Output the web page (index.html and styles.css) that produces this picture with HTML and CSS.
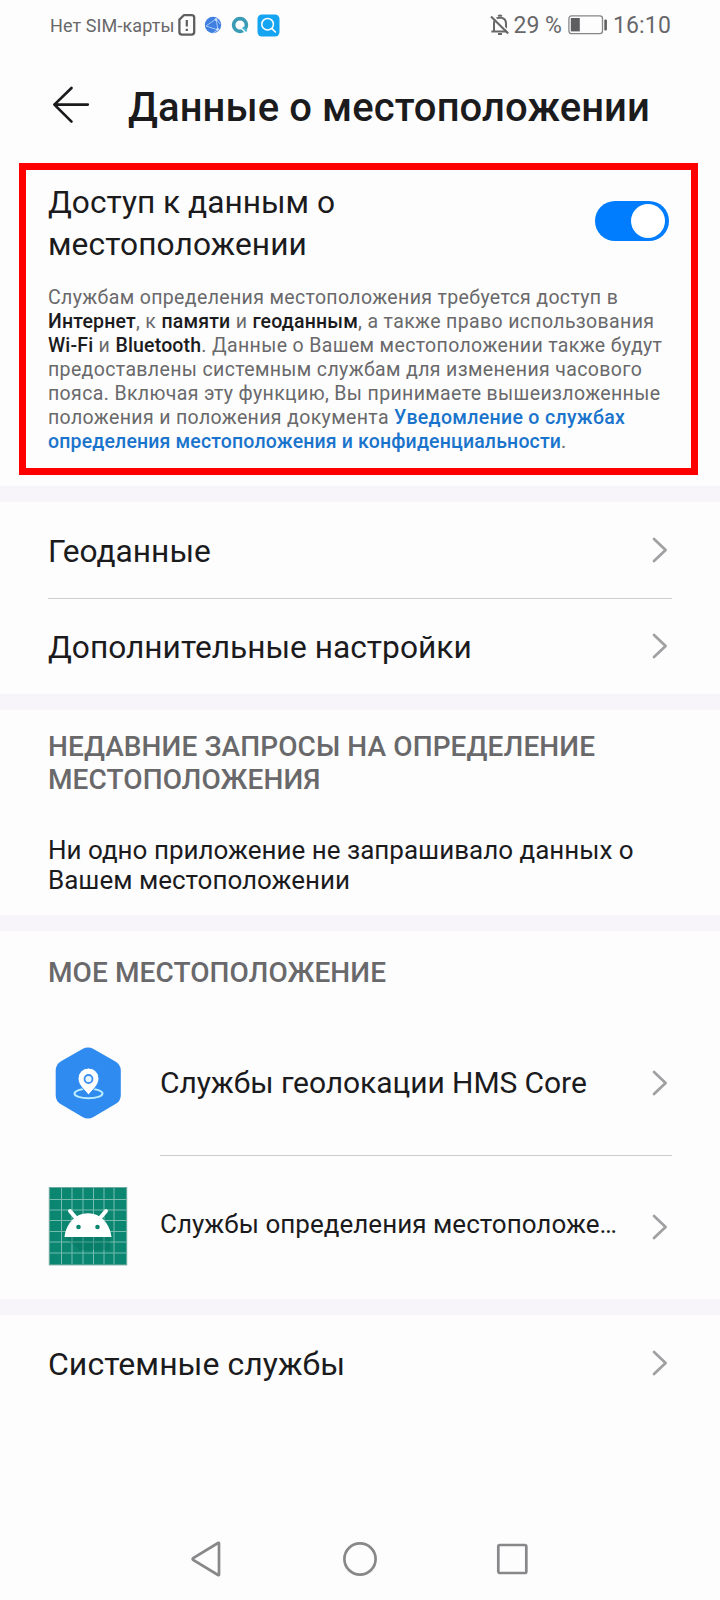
FILE: index.html
```html
<!DOCTYPE html>
<html lang="ru">
<head>
<meta charset="utf-8">
<title>Данные о местоположении</title>
<link rel="stylesheet" href="styles.css">
</head>
<body>
<svg class="defs" width="0" height="0" aria-hidden="true">
  <symbol id="chevron" viewBox="0 0 16 26"><path d="M2 2 L13.6 13 L2 24" fill="none" stroke="#a09fa2" stroke-width="2.7" stroke-linecap="round" stroke-linejoin="round"/></symbol>
</svg>
<header class="status">
  <span class="carrier">Нет SIM-карты</span>
  <svg class="sim" width="18" height="22" viewBox="0 0 18 22"><path d="M5.800 1.200H13.600Q16.200 1.200 16.200 3.800V18Q16.200 20.600 13.600 20.600H4Q1.400 20.600 1.400 18V5.600Z" fill="none" stroke="#5f5f61" stroke-width="2.300" stroke-linejoin="round"/><path d="M8.800 6V12.600M8.800 14.800V17" stroke="#5f5f61" stroke-width="2.200"/></svg>
  <svg class="globe" width="18" height="18" viewBox="0 0 18 18"><circle cx="9" cy="9" r="8.200" fill="#3f7fe0"/><path d="M2 10L12 3L14 14L2 10M12 3L16 8M14 14L9 17" fill="none" stroke="#a8c8f8" stroke-width="1"/><circle cx="12" cy="3.600" r="1.300" fill="#cfe2ff"/><circle cx="13.600" cy="13.400" r="1.300" fill="#cfe2ff"/></svg>
  <svg class="ring" width="18" height="18" viewBox="0 0 18 18"><circle cx="9" cy="9" r="6.400" fill="none" stroke="#3a9bb5" stroke-width="3.600"/><path d="M10.500 12.500L12.500 10.500L16.500 14.500L14.500 16.500Z" fill="#4cb9dc"/><path d="M10.500 12.500L15 17" stroke="#fdfdfd" stroke-width="1.300"/></svg>
  <svg class="search" width="23" height="23" viewBox="0 0 23 23"><rect x=".5" y=".5" width="22" height="22" rx="4.500" fill="#15a4f2"/><circle cx="10.600" cy="10.200" r="5.800" fill="none" stroke="#fff" stroke-width="1.500"/><path d="M15 14.600L18.400 18" stroke="#fff" stroke-width="1.600" stroke-linecap="round"/></svg>
  <span class="spacer"></span>
  <svg class="bell" width="20" height="22" viewBox="0 0 20 22"><path d="M4 17V9.500Q4 4 10 3.400Q16 4 16 9.500V17M1.400 17.600H18.200" fill="none" stroke="#68686a" stroke-width="2"/><path d="M8.200 2.400Q10 .2 11.800 2.400M8 20H12" fill="none" stroke="#68686a" stroke-width="1.800"/><path d="M2.600 1.600L19.400 18.200" stroke="#fdfdfd" stroke-width="1.600"/><path d="M1 2.400L18.200 19.600" stroke="#68686a" stroke-width="2.100"/></svg>
  <span class="pct">29 %</span>
  <svg class="battery" width="40" height="20" viewBox="0 0 40 20"><rect x=".9" y=".9" width="33.600" height="17.800" rx="2.600" fill="none" stroke="#868688" stroke-width="1.300"/><rect x="2.800" y="3" width="9" height="13.400" fill="#5e5e60"/><rect x="36.300" y="4.400" width="2.600" height="11" rx="1" fill="#5e5e60"/></svg>
  <span class="clock">16:10</span>
</header>
<div class="titlebar">
  <svg class="back" width="38" height="38" viewBox="0 0 38 38"><path d="M19.500 2L2.400 18.600L19.500 35.600M2.400 18.600H35.800" fill="none" stroke="#1b1b1d" stroke-width="2.700" stroke-linecap="round" stroke-linejoin="round"/></svg>
  <h1 class="title">Данные о местоположении</h1>
</div>
<section class="access">
  <div class="access-row">
    <h2 class="access-title">Доступ к данным о<br><span class="wide">местоположении</span></h2>
    <span class="switch"><span class="knob"></span></span>
  </div>
  <p class="note">Службам определения местоположения требуется доступ в<br><b>Интернет</b>, к <b>памяти</b> и <b>геоданным</b>, а также право использования<br><b>Wi-Fi</b> и <b>Bluetooth</b>. Данные о Вашем местоположении также будут<br>предоставлены системным службам для изменения часового<br>пояса. Включая эту функцию, Вы принимаете вышеизложенные<br>положения и положения документа <a class="link first-line">Уведомление о службах</a><br><a class="link">определения местоположения и конфиденциальности</a>.</p>
</section>
<section class="group nav-group">
  <div class="row"><span class="label">Геоданные</span><svg class="chev"><use href="#chevron"/></svg></div>
  <div class="row ruled"><span class="label">Дополнительные настройки</span><svg class="chev"><use href="#chevron"/></svg></div>
</section>
<section class="group recent">
  <h3 class="caption">НЕДАВНИЕ ЗАПРОСЫ НА ОПРЕДЕЛЕНИЕ<br>МЕСТОПОЛОЖЕНИЯ</h3>
  <p class="empty">Ни одно приложение не запрашивало данных о<br>Вашем местоположении</p>
</section>
<section class="group mine">
  <h3 class="caption">МОЕ МЕСТОПОЛОЖЕНИЕ</h3>
  <div class="app first">
    <svg class="app-icon" width="80" height="80" viewBox="0 0 80 80"><path d="M34.500 6Q40 3.100 45.500 6L67 18.200Q72.800 21.500 72.800 27.500V52.300Q72.800 58.300 67 61.300L45.500 74Q40 77.200 34.500 74L13 61.300Q7.700 58.300 7.700 52.300V27.500Q7.700 21.500 13 18.200Z" fill="#2f8bf0"/><ellipse cx="40.500" cy="50.500" rx="14" ry="4.800" fill="none" stroke="#b9edff" stroke-width="2"/><path d="M40.500 52C36 46.500 30 42 30 35.500A10.500 10.500 0 0 1 51 35.500C51 42 45 46.500 40.500 52Z" fill="#fff" stroke="#2f8bf0" stroke-width="1"/><circle cx="40.500" cy="36" r="4" fill="#e8f6ff" stroke="#3d8ff0" stroke-width="1.800"/></svg>
    <div class="app-body"><span class="app-name">Службы геолокации HMS Core</span><svg class="chev"><use href="#chevron"/></svg></div>
  </div>
  <div class="app second">
    <svg class="app-icon" width="80" height="80" viewBox="0 0 80 80"><rect x="1.300" y="1.500" width="77.400" height="77.400" fill="#0b8671"/><path d="M13.500 2V78M24 2V78M35 2V78M45.500 2V78M56 2V78M66 2V78M2 13.500H78M2 24H78M2 34.500H78M2 45.500H78M2 56H78M2 67H78" stroke="#75bcae" stroke-width="1"/><rect x="1.300" y="1.500" width="77.400" height="77.400" fill="none" stroke="#6fa99e" stroke-width="1"/><path d="M17 51L31 64H62V51Z" fill="#04705e" opacity=".35"/><path d="M16.500 51C17.500 41 24 30.500 35 27.800Q40 26.500 45 27.800C56 30.500 62.500 41 63.500 51Z" fill="#fff"/><path d="M22 25L28 32M58 25L52 32" stroke="#fff" stroke-width="4" stroke-linecap="round"/><circle cx="30.500" cy="41" r="2.300" fill="#0b8671"/><circle cx="49.500" cy="41" r="2.300" fill="#0b8671"/></svg>
    <div class="app-body"><span class="app-name small">Службы определения местоположе…</span><svg class="chev"><use href="#chevron"/></svg></div>
  </div>
</section>
<section class="group system">
  <div class="row"><span class="label">Системные службы</span><svg class="chev"><use href="#chevron"/></svg></div>
</section>
<footer class="navbar">
  <svg width="34" height="38" viewBox="0 0 34 38"><path d="M29 3.400V34.600Q29 35.600 28 35L3.200 20Q2 19 3.200 18L28 3Q29 2.400 29 3.400Z" fill="none" stroke="#88888a" stroke-width="2.700"/></svg>
  <svg width="38" height="38" viewBox="0 0 38 38"><circle cx="19" cy="19" r="15.600" fill="none" stroke="#88888a" stroke-width="2.700"/></svg>
  <svg width="34" height="38" viewBox="0 0 34 38"><rect x="2.300" y="5" width="28" height="28" rx="1.500" fill="none" stroke="#88888a" stroke-width="2.700"/></svg>
</footer>
</body>
</html>
```

FILE: styles.css
```css
* { box-sizing: border-box; }
body {
  margin: 0;
  width: 720px;
  height: 1600px;
  display: flex;
  flex-direction: column;
  background: #fdfdfd;
  color: #1b1b1d;
  font-family: Roboto, "Noto Sans", sans-serif;
  overflow: hidden;
}
h1, h2, h3, p { margin: 0; font-weight: 400; white-space: nowrap; }
svg { display: block; flex: none; }
.defs { position: absolute; }

.status {
  height: 50px;
  padding: 0 49px 0 50px;
  display: flex;
  align-items: center;
  color: #68686a;
  white-space: nowrap;
}
.carrier { font-size: 18px; letter-spacing: 0.1px; padding-top: 1px; }
.sim { margin-left: 3px; }
.globe { margin-left: 8px; }
.ring { margin-left: 9px; }
.search { margin-left: 8px; }
.spacer { flex: 1; }
.pct { font-size: 23px; margin-left: 4px; }
.battery { margin-left: 6px; }
.clock { font-size: 23px; margin-left: 5px; letter-spacing: 0.15px; }

.titlebar {
  height: 113px;
  padding: 0 0 0 52px;
  display: flex;
  align-items: center;
}
.back { margin-bottom: 3px; }
.title {
  margin-left: 38px;
  padding-top: 2px;
  font-size: 40px;
  line-height: 50px;
  font-weight: 500;
  letter-spacing: 0.08px;
}

.access {
  width: 679px;
  height: 312px;
  margin: 0 0 11px 19px;
  padding: 12px 22px 0;
  border: 7px solid #fe0000;
}
.access-row { display: flex; justify-content: space-between; }
.access-title { font-size: 31.7px; line-height: 42px; }
.wide { letter-spacing: 0.12px; }
.switch {
  width: 74px;
  height: 40px;
  margin: 19px 0 0;
  padding: 3px 4px;
  display: flex;
  justify-content: flex-end;
  border-radius: 20px;
  background: #007dff;
}
.knob { width: 34px; height: 34px; border-radius: 50%; background: #fff; }
.note {
  margin-top: 20px;
  font-size: 19.5px;
  line-height: 24px;
  letter-spacing: 0.36px;
  color: #69696b;
}
.note b { font-weight: 500; letter-spacing: 0.18px; color: #1b1b1d; }
.link { font-weight: 500; letter-spacing: 0.16px; color: #1a74cc; }
.first-line { letter-spacing: 0.32px; }

.group { border-top: 16px solid #f7f5f9; padding: 0 48px; }
.row { height: 96px; display: flex; align-items: center; justify-content: space-between; }
.ruled { border-top: 1px solid #cfcbd1; }
.label { font-size: 31.7px; line-height: 40px; padding-top: 3px; }
.ruled .label { padding-top: 2px; }
.chev { width: 16px; height: 26px; margin-right: 4px; }
.ruled .chev { margin-bottom: 2px; }
.nav-group { height: 208px; }

.recent { height: 221px; padding-top: 20px; }
.caption {
  font-size: 28px;
  line-height: 33px;
  font-weight: 500;
  letter-spacing: 0.1px;
  color: #69696b;
}
.empty { margin-top: 39px; font-size: 26px; line-height: 30px; }

.mine { height: 384px; padding-top: 25px; }
.app { display: flex; align-items: center; gap: 32px; height: 144px; }
.app-body { flex: 1; height: 100%; display: flex; align-items: center; justify-content: space-between; }
.app-name { font-size: 30px; letter-spacing: -0.07px; padding-bottom: 2px; white-space: nowrap; }
.first { margin-top: 22px; }
.second { height: 142px; }
.second .app-body { border-top: 1px solid #cfcbd1; }
.small { font-size: 26px; letter-spacing: 0.03px; padding-bottom: 6px; }

.system { height: 219px; }
.system .label { font-size: 32px; letter-spacing: 0.04px; padding-top: 1px; }
.navbar {
  height: 82px;
  padding: 0 190px;
  display: flex;
  justify-content: space-between;
  align-items: center;
}
```
